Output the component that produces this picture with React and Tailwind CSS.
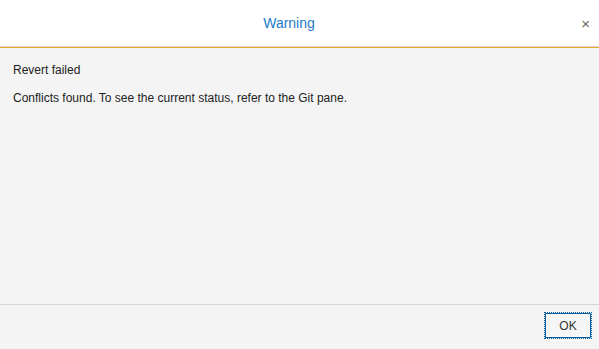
export default function App() {
  return (
    <div className="w-[599px] h-[349px] flex flex-col bg-[#f4f4f4] font-['Liberation_Sans',Arial,sans-serif] overflow-hidden">
      {/* Header */}
      <div className="relative h-[46px] bg-white flex items-center justify-center pr-[21px] shrink-0">
        <h1 className="text-[14px] text-[#1e7cc8]">Warning</h1>
        <button className="absolute right-[9px] top-[16px] text-[#666] text-[15px] leading-none">×</button>
      </div>
      <div className="h-px bg-[#d6d6d6]" />
      <div className="h-px bg-[#e8a82c]" />

      {/* Body */}
      <div className="flex-1 px-[13px] pt-[13px] text-[12px] text-[#222]">
        <p>Revert failed</p>
        <p className="mt-[10px]">Conflicts found. To see the current status, refer to the Git pane.</p>
      </div>

      {/* Footer */}
      <div className="h-px bg-[#d4d4d4]" />
      <div className="h-[44px] flex items-start justify-end pt-[7px] pr-[7px]">
        <button className="w-[48px] h-[27px] border border-dotted border-[#0b5ea0] outline outline-1 outline-[#0b5ea0] -outline-offset-2 bg-[#f6f6f6] text-[12px] text-[#333]">
          OK
        </button>
      </div>
    </div>
  )
}
